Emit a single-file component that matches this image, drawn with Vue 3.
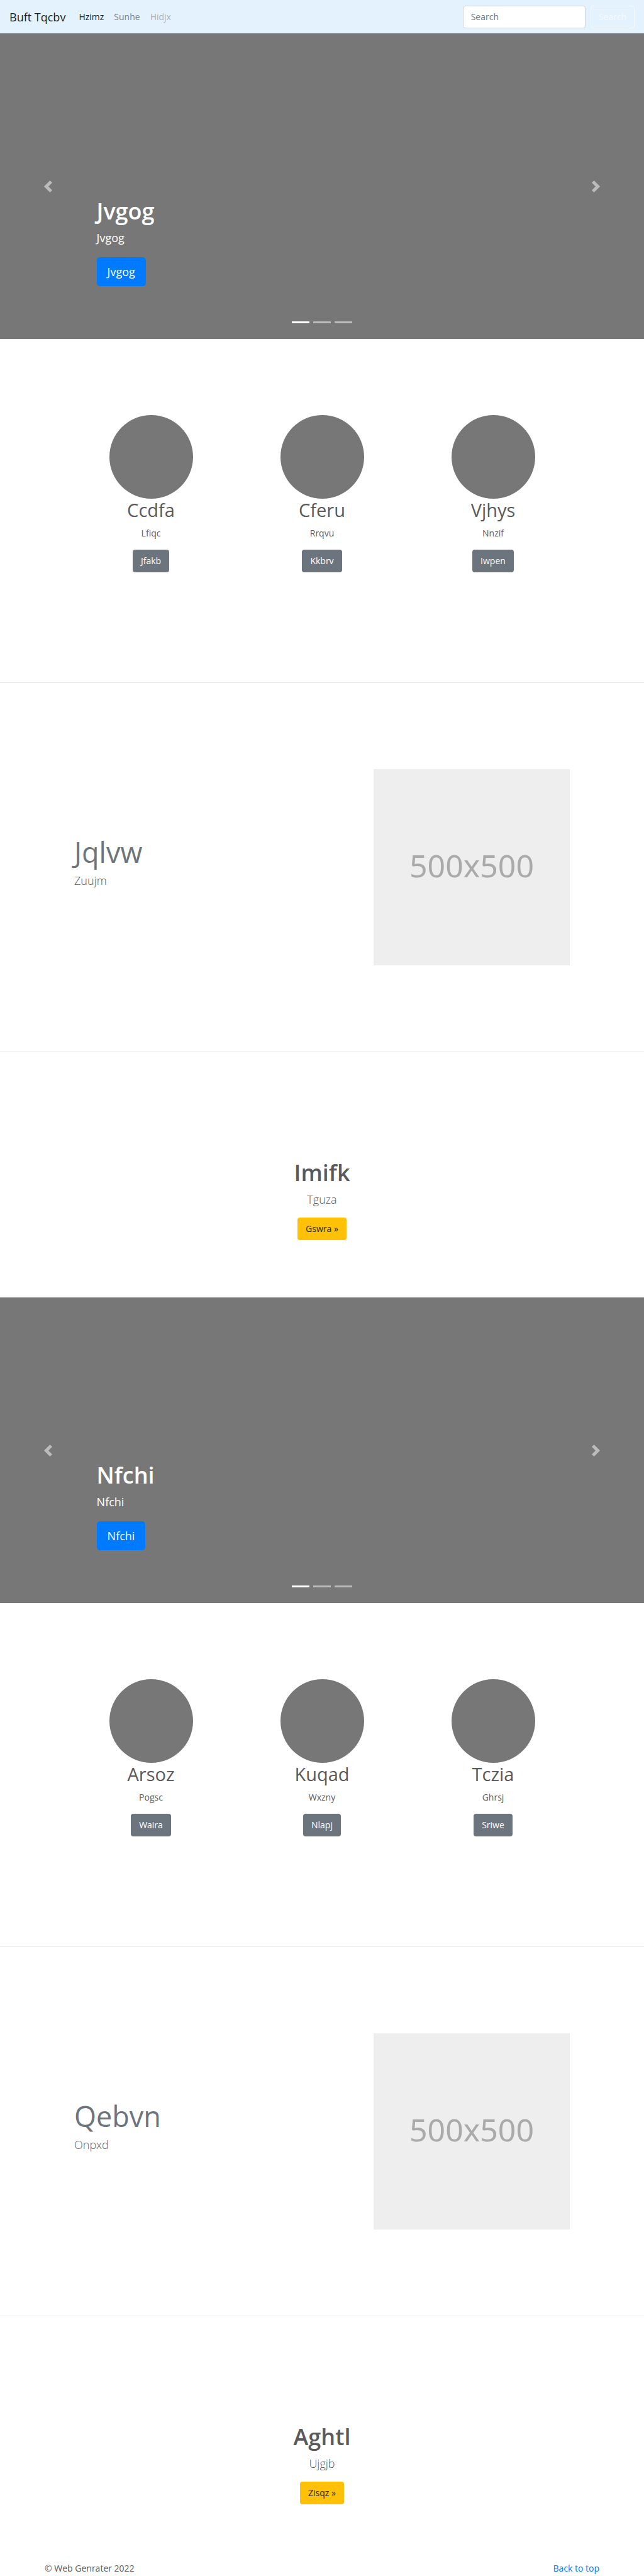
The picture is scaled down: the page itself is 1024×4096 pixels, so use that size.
<script setup>
const blocks = [
  {
    slide: 'Jvgog',
    columns: [
      { title: 'Ccdfa', text: 'Lfiqc', action: 'Jfakb' },
      { title: 'Cferu', text: 'Rrqvu', action: 'Kkbrv' },
      { title: 'Vjhys', text: 'Nnzif', action: 'Iwpen' },
    ],
    feature: { title: 'Jqlvw', text: 'Zuujm' },
    callout: { title: 'Imifk', text: 'Tguza', action: 'Gswra »' },
  },
  {
    slide: 'Nfchi',
    columns: [
      { title: 'Arsoz', text: 'Pogsc', action: 'Waira' },
      { title: 'Kuqad', text: 'Wxzny', action: 'Nlapj' },
      { title: 'Tczia', text: 'Ghrsj', action: 'Sriwe' },
    ],
    feature: { title: 'Qebvn', text: 'Onpxd' },
    callout: { title: 'Aghtl', text: 'Ujgjb', action: 'Zisqz »' },
  },
]
</script>

<template>
  <div class="page">
    <header class="navbar">
      <a class="brand" href="#">Buft Tqcbv</a>
      <nav class="links">
        <a class="link active" href="#">Hzimz</a>
        <a class="link" href="#">Sunhe</a>
        <a class="link disabled" href="#">Hidjx</a>
      </nav>
      <form class="search" @submit.prevent>
        <input class="search-input" type="search" placeholder="Search" aria-label="Search" />
        <button class="search-button" type="submit">Search</button>
      </form>
    </header>

    <main>
      <template v-for="block in blocks" :key="block.slide">
        <section class="carousel">
          <button class="control" type="button" aria-label="Previous">
            <svg class="chevron" viewBox="0 0 8 8"><path d="M5.25 0l-4 4 4 4 1.5-1.5-2.5-2.5 2.5-2.5-1.5-1.5z" /></svg>
          </button>
          <div class="caption">
            <h1 class="caption-title">{{ block.slide }}</h1>
            <p class="caption-text">{{ block.slide }}</p>
            <a class="button primary" href="#">{{ block.slide }}</a>
          </div>
          <button class="control" type="button" aria-label="Next">
            <svg class="chevron" viewBox="0 0 8 8"><path d="M2.75 0l-1.5 1.5 2.5 2.5-2.5 2.5 1.5 1.5 4-4-4-4z" /></svg>
          </button>
          <div class="indicators">
            <span class="indicator current"></span>
            <span class="indicator"></span>
            <span class="indicator"></span>
          </div>
        </section>

        <section class="columns">
          <article v-for="column in block.columns" :key="column.title" class="column">
            <div class="circle"></div>
            <h2 class="column-title">{{ column.title }}</h2>
            <p class="column-text">{{ column.text }}</p>
            <a class="button secondary" href="#">{{ column.action }}</a>
          </article>
        </section>

        <hr class="divider" />

        <section class="feature">
          <div class="feature-body">
            <h2 class="feature-title">{{ block.feature.title }}</h2>
            <p class="lead">{{ block.feature.text }}</p>
          </div>
          <div class="placeholder">500x500</div>
        </section>

        <hr class="divider" />

        <section class="callout">
          <h1 class="callout-title">{{ block.callout.title }}</h1>
          <p class="lead">{{ block.callout.text }}</p>
          <a class="button warning" href="#">{{ block.callout.action }}</a>
        </section>
      </template>
    </main>

    <footer class="footer">
      <p class="copyright">© Web Genrater 2022</p>
      <a class="top-link" href="#">Back to top</a>
    </footer>
  </div>
</template>

<style>
body {
  margin: 0;
  background: #fff;
}
</style>

<style scoped>
.page {
  color: #5a5a5a;
  font-family: "Open Sans", "Noto Sans", sans-serif;
  font-size: 14px;
  line-height: 22px;
}

.page * {
  box-sizing: border-box;
}

h1,
h2,
p {
  margin: 0;
}

a {
  text-decoration: none;
}

button,
input {
  font: inherit;
}

.navbar {
  display: flex;
  align-items: center;
  height: 53px;
  padding: 0 15px;
  background: #e3f2fd;
}

.brand {
  margin-right: 21px;
  color: rgba(0, 0, 0, 0.9);
  font-size: 18px;
  line-height: 28px;
}

.links {
  display: flex;
  flex: 1;
  gap: 16px;
}

.link {
  color: rgba(0, 0, 0, 0.5);
}

.link.active {
  color: rgba(0, 0, 0, 0.9);
}

.link.disabled {
  color: rgba(0, 0, 0, 0.3);
}

.search {
  display: flex;
  gap: 8px;
}

.search-input {
  width: 195px;
  height: 36px;
  padding: 0 12px;
  border: 1px solid #ced4da;
  border-radius: 4px;
  background: #fff;
  color: #495057;
  appearance: none;
}

.search-input::placeholder {
  color: #6c757d;
  opacity: 1;
}

.search-button {
  height: 36px;
  padding: 0 12px;
  border: 1px solid #f8f9fa;
  border-radius: 4px;
  background: transparent;
  color: #f8f9fa;
}

.carousel {
  position: relative;
  display: flex;
  height: 486px;
  background: #777;
}

.control {
  display: flex;
  flex: 0 0 15%;
  align-items: center;
  justify-content: center;
  padding: 0;
  border: 0;
  background: none;
  opacity: 0.5;
}

.chevron {
  width: 19px;
  height: 19px;
  fill: #fff;
}

.caption {
  display: flex;
  flex: 1;
  flex-direction: column;
  align-items: flex-start;
  justify-content: flex-end;
  padding-bottom: 84px;
  color: #fff;
}

.caption-title,
.callout-title {
  margin-bottom: 6px;
  font-size: 36px;
  font-weight: 600;
  line-height: 46px;
}

.caption-text {
  margin-bottom: 18px;
  font-size: 18px;
  line-height: 26px;
}

.indicators {
  position: absolute;
  right: 0;
  bottom: 25px;
  left: 0;
  display: flex;
  justify-content: center;
  gap: 6px;
}

.indicator {
  width: 28px;
  height: 3px;
  background: #fff;
  opacity: 0.5;
}

.indicator.current {
  opacity: 1;
}

.button {
  padding: 7px 13px;
  border-radius: 4px;
}

.primary {
  padding: 10px 17px;
  border-radius: 5px;
  background: #007bff;
  color: #fff;
  font-size: 18px;
  line-height: 26px;
}

.secondary {
  background: #6c757d;
  color: #fff;
}

.warning {
  background: #ffc107;
  color: #212529;
}

.columns {
  display: flex;
  max-width: 816px;
  margin: 0 auto;
  padding: 121px 0 175px;
}

.column {
  display: flex;
  flex: 1;
  flex-direction: column;
  align-items: center;
}

.circle {
  width: 133px;
  height: 133px;
  border-radius: 50%;
  background: #777;
}

.column-title {
  margin-bottom: 8px;
  font-size: 29px;
  font-weight: 400;
  line-height: 36px;
}

.column-text {
  margin-bottom: 15px;
}

.divider {
  height: 1px;
  margin: 0;
  border: 0;
  background: #e5e5e5;
}

.feature {
  display: flex;
  align-items: center;
  justify-content: space-between;
  max-width: 788px;
  margin: 0 auto;
  padding: 137px 0;
}

.feature-title {
  margin-bottom: 6px;
  color: #6c757d;
  font-size: 45px;
  font-weight: 400;
  line-height: 52px;
}

.lead {
  margin-bottom: 16px;
  font-size: 18px;
  font-weight: 300;
  line-height: 26px;
}

.placeholder {
  display: flex;
  align-items: center;
  justify-content: center;
  width: 312px;
  height: 312px;
  padding-bottom: 6px;
  background: #eee;
  color: #aaa;
  font-family: "Noto Sans", sans-serif;
  font-size: 50px;
}

.callout {
  display: flex;
  flex-direction: column;
  align-items: center;
  padding: 169px 0 91px;
}

.footer {
  display: flex;
  justify-content: space-between;
  max-width: 882px;
  margin: 0 auto;
}

.top-link {
  color: #007bff;
}
</style>
